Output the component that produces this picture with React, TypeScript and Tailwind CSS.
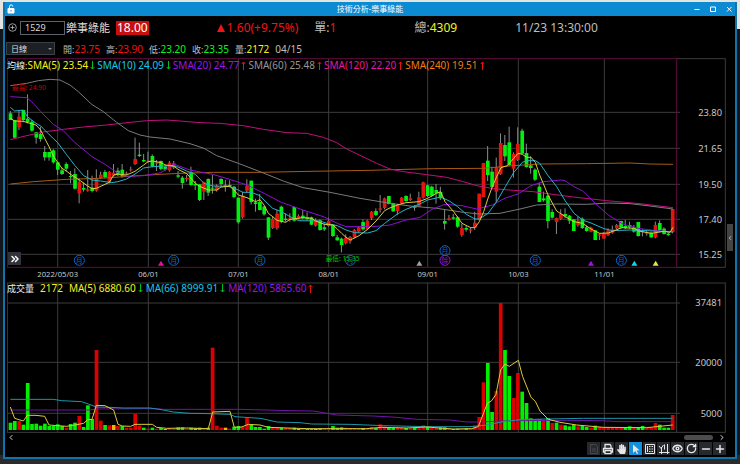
import React, { useState } from 'react';
import { ChevronLeft, ChevronRight, ChevronsRight, Eye, Minus, Plus, RotateCw } from 'lucide-react';
import { FaHandPaper } from 'react-icons/fa';

// Chart space: one unit is a third of a pixel, one bar every 12.9 units
const FIRST_X = 31;
const STEP = 12.9;
const barX = (i: number) => FIRST_X + i * STEP;

type Candle = [string, number, number, number, number];

// colour, body top, body bottom, wick top, wick bottom
const candles: Candle[] = [
    ['g', 115, 135, 108, 135], ['g', 135, 188, 135, 190], ['r', 125, 157, 105, 165], ['g', 105, 135, 105, 142],
    ['g', 131, 142, 58, 145], ['g', 140, 167, 135, 170], ['g', 172, 188, 172, 206], ['g', 177, 192, 155, 200],
    ['g', 231, 247, 213, 257], ['g', 231, 247, 231, 257], ['g', 226, 262, 222, 266], ['g', 262, 284, 262, 300],
    ['g', 286, 297, 278, 300], ['g', 267, 281, 262, 290], ['g', 303, 306, 288, 325], ['g', 297, 341, 280, 343],
    ['r', 322, 355, 310, 385], ['g', 339, 344, 322, 350], ['r', 343, 347, 285, 350], ['g', 338, 348, 302, 352],
    ['r', 310, 347, 283, 350], ['r', 299, 309, 290, 312], ['g', 291, 307, 285, 310], ['r', 291, 322, 288, 326],
    ['r', 293, 302, 267, 305], ['g', 287, 300, 278, 303], ['g', 284, 304, 267, 308], ['r', 293, 296, 290, 300],
    ['r', 283, 286, 275, 290], ['r', 252, 267, 188, 270], ['g', 239, 243, 203, 246], ['g', 255, 259, 237, 262],
    ['r', 257, 260, 230, 263], ['g', 243, 274, 238, 277], ['r', 262, 266, 255, 288], ['g', 258, 282, 257, 286],
    ['g', 275, 284, 268, 287], ['r', 263, 286, 258, 290], ['r', 265, 278, 258, 282], ['g', 301, 305, 288, 310],
    ['g', 308, 324, 303, 341], ['r', 309, 313, 300, 320], ['g', 291, 330, 275, 332], ['g', 327, 331, 318, 345],
    ['g', 328, 375, 328, 378], ['r', 322, 350, 320, 375], ['g', 312, 353, 310, 363], ['g', 338, 341, 300, 356],
    ['r', 333, 346, 328, 350], ['g', 312, 327, 310, 333], ['g', 331, 334, 315, 350], ['g', 330, 334, 316, 337],
    ['g', 335, 366, 333, 370], ['g', 368, 442, 368, 446], ['r', 362, 427, 350, 431], ['r', 333, 347, 313, 352],
    ['g', 317, 381, 317, 388], ['g', 382, 387, 371, 410], ['g', 381, 405, 357, 406], ['g', 395, 418, 393, 422],
    ['g', 427, 488, 427, 495], ['r', 432, 459, 423, 462], ['r', 416, 460, 405, 464], ['g', 395, 440, 392, 445],
    ['g', 431, 435, 415, 440], ['r', 430, 434, 415, 440], ['g', 396, 437, 395, 440], ['r', 423, 430, 418, 433],
    ['g', 422, 430, 405, 433], ['g', 427, 432, 412, 437], ['g', 427, 449, 425, 450], ['r', 435, 452, 430, 455],
    ['g', 436, 465, 433, 467], ['g', 457, 463, 445, 468], ['r', 437, 453, 428, 455], ['g', 449, 483, 448, 486],
    ['g', 487, 496, 480, 497], ['g', 491, 510, 488, 532], ['r', 489, 505, 478, 508], ['r', 486, 499, 483, 506],
    ['r', 465, 487, 462, 490], ['r', 457, 470, 453, 474], ['g', 441, 463, 433, 467], ['r', 437, 462, 434, 465],
    ['r', 410, 430, 408, 435], ['g', 408, 420, 400, 423], ['r', 400, 404, 360, 413], ['r', 370, 399, 368, 403],
    ['g', 363, 387, 363, 388], ['g', 385, 409, 383, 411], ['r', 390, 408, 386, 420], ['r', 368, 385, 366, 387],
    ['g', 363, 378, 361, 380], ['r', 370, 375, 356, 378], ['g', 394, 398, 390, 407], ['r', 367, 394, 350, 396],
    ['r', 322, 368, 320, 371], ['g', 331, 363, 329, 366], ['g', 335, 362, 332, 366], ['g', 345, 355, 327, 386],
    ['g', 351, 370, 335, 375], ['g', 438, 446, 405, 464], ['r', 430, 434, 420, 437], ['g', 427, 431, 417, 434],
    ['g', 427, 455, 424, 458], ['r', 459, 480, 446, 485], ['g', 459, 464, 453, 470], ['r', 463, 467, 458, 475],
    ['r', 443, 458, 410, 465], ['r', 356, 434, 356, 436], ['r', 264, 366, 264, 366], ['g', 257, 300, 213, 318],
    ['g', 290, 336, 275, 338], ['r', 276, 350, 248, 382], ['r', 204, 298, 175, 300], ['g', 210, 244, 180, 258],
    ['g', 202, 270, 155, 273], ['r', 237, 281, 232, 308], ['r', 207, 255, 157, 258], ['g', 167, 236, 161, 238],
    ['g', 234, 276, 206, 278], ['g', 271, 279, 244, 296], ['g', 284, 314, 280, 318], ['g', 335, 381, 323, 381],
    ['g', 370, 376, 350, 380], ['g', 362, 438, 360, 460], ['g', 411, 428, 403, 431], ['r', 429, 441, 428, 477],
    ['r', 417, 431, 403, 435], ['g', 417, 424, 400, 430], ['g', 422, 437, 420, 447], ['g', 433, 468, 433, 468],
    ['r', 437, 451, 425, 455], ['g', 431, 459, 427, 462], ['g', 457, 468, 452, 470], ['r', 458, 470, 455, 472],
    ['g', 466, 495, 466, 495], ['r', 478, 482, 475, 495], ['r', 474, 491, 472, 491], ['r', 466, 480, 460, 483],
    ['r', 463, 473, 452, 476], ['r', 450, 460, 447, 463], ['g', 438, 458, 438, 462], ['g', 453, 459, 435, 463],
    ['g', 450, 457, 440, 460], ['g', 458, 470, 450, 473], ['g', 441, 483, 441, 485], ['r', 468, 472, 463, 484],
    ['r', 472, 476, 467, 482], ['g', 473, 487, 470, 489], ['r', 450, 487, 440, 490], ['g', 444, 465, 436, 467],
    ['g', 461, 477, 457, 479], ['g', 476, 480, 472, 483], ['r', 402, 472, 402, 475],
];

const volumes =
    'g443 g438 r438 g449 g324 g447 g446 g452 g446 g453 g453 g448 g453 r458 g447 g443 r423 g456 g391 g432 ' +
    'r225 r437 g450 r451 y450 r453 g453 r458 r458 r417 r452 g458 r461 g458 r461 g459 y462 r459 r461 g457 ' +
    'g457 r461 g458 y460 g458 r460 g458 r218 r452 r458 y458 r461 g455 g453 r455 r429 g450 g456 g456 g461 ' +
    'g453 r456 r456 g458 r459 r459 g458 y462 r459 g460 g461 y462 g460 r461 r460 g453 g458 g457 r458 r459 ' +
    'r460 r461 g459 r459 r456 g459 r448 r455 g456 g458 r458 r459 g459 r460 g459 r459 r451 g455 r458 r459 ' +
    'g457 g457 r461 y462 g461 r461 g460 r461 r452 r426 r322 g264 g411 r348 r84 g225 g303 r369 r294 g350 ' +
    'g384 g430 g434 g433 r436 g429 r444 g443 r449 g451 g454 g449 r454 g453 g456 r458 g452 r456 r457 r458 ' +
    'r458 r458 r458 g456 g454 r456 g457 g453 r458 r457 r444 g449 g458 g458 r420';

const priceLines = [
    { color: '#a85a14', points: '31,327 100,320 200,313 300,310 400,303 480,298 540,295 640,292 780,292 930,289 1110,286 1180,284 1300,281 1450,280 1540,272 1620,267 1760,266 1890,264 1950,267 2019,268' },
    { color: '#c0107c', points: '31,194 80,182 130,171 190,163 250,156 320,150 390,142 440,137 500,135 540,138 600,143 660,145 730,152 790,163 860,173 920,175 970,187 1010,203 1040,222 1080,241 1130,265 1170,282 1210,290 1280,299 1340,307 1390,320 1430,332 1480,341 1540,346 1600,350 1620,353 1720,366 1820,377 1920,386 2019,398' },
    { color: '#7a7a7a', points: '31,32 80,25 115,17 150,13 180,15 210,30 235,50 275,88 310,110 350,142 385,167 420,180 450,186 510,192 570,206 612,220 650,242 715,265 780,290 850,318 909,338 990,352 1080,370 1170,385 1230,393 1310,400 1390,412 1438,417 1500,415 1560,402 1610,390 1670,387 1760,388 1825,384 1890,386 1950,393 2019,402' },
    { color: '#8a12d0', points: '31,65 80,68 95,80 122,110 160,148 190,167 225,203 276,245 315,268 350,292 380,304 431,302 483,293 521,267 570,285 638,298 689,313 741,330 792,355 844,382 909,405 973,426 1012,445 1038,455 1080,455 1130,454 1170,450 1218,435 1260,427 1296,403 1335,388 1386,392 1430,402 1477,390 1516,369 1554,357 1593,332 1630,320 1682,315 1695,317 1722,335 1748,348 1786,385 1825,420 1870,448 1920,461 1970,467 2019,470' },
    { color: '#22b4cc', points: '31,97 44,108 70,105 82,125 108,145 122,153 147,178 173,203 199,238 225,272 251,302 276,315 302,318 335,323 354,320 380,312 405,297 431,279 457,275 509,272 534,276 560,288 586,298 612,325 638,333 689,334 715,345 728,352 754,352 780,362 792,375 818,400 844,410 870,425 896,437 960,438 986,447 1012,452 1038,465 1064,473 1103,474 1128,467 1154,445 1192,417 1218,403 1257,388 1283,375 1322,366 1348,378 1373,395 1399,418 1425,432 1438,432 1464,415 1490,380 1516,335 1541,293 1567,262 1580,257 1606,257 1619,265 1645,303 1670,335 1696,378 1722,415 1748,435 1773,444 1812,461 1838,467 1890,465 1942,467 2019,471' },
    { color: '#dccb3c', points: '31,130 44,138 70,139 90,145 108,150 122,165 134,190 147,215 160,243 173,262 186,280 199,288 212,298 238,315 263,333 276,341 289,340 328,322 341,300 354,297 380,300 405,289 431,270 444,260 457,258 483,263 496,270 521,273 534,283 560,296 573,310 586,325 599,334 625,345 650,345 663,336 689,334 702,345 715,360 741,368 754,374 767,380 780,374 792,390 805,415 818,425 831,436 857,442 870,433 909,428 935,430 947,438 973,448 999,450 1012,462 1025,475 1038,487 1051,495 1077,482 1103,463 1128,438 1154,407 1167,400 1192,390 1218,383 1257,380 1283,370 1309,355 1322,350 1335,380 1361,410 1386,445 1412,458 1425,458 1438,440 1451,410 1464,370 1477,335 1490,305 1503,278 1522,272 1541,250 1554,235 1567,238 1580,247 1593,247 1606,262 1619,300 1645,362 1670,408 1696,425 1722,440 1748,445 1773,462 1799,475 1825,474 1851,464 1864,458 1903,460 1916,468 1954,475 1993,469 2010,472 2019,457' },
];

const volumeLines = [
    { color: '#7314a8', points: '31,405 270,405 289,402 470,401 490,403 720,403 870,407 940,408 970,413 1010,420 1120,423 1190,427 1250,433 1350,435 1400,441 1440,441 1500,438 1560,437 1700,436 1800,437 1860,440 2018,440' },
    { color: '#1e96a8', points: '31,373 160,373 185,377 245,380 265,387 289,396 330,397 370,399 450,399 490,405 520,411 570,415 630,416 690,418 705,425 780,430 795,433 830,441 900,443 935,447 1050,448 1150,452 1280,455 1410,455 1460,450 1510,440 1560,434 1640,432 1750,430 2018,430' },
    { color: '#dccb3c', points: '31,396 44,430 70,438 82,421 108,421 134,424 147,450 199,454 225,450 251,445 263,434 276,433 289,391 315,392 341,405 354,448 367,453 392,454 405,448 457,448 470,457 500,460 560,459 625,461 638,411 690,409 703,457 725,456 745,448 780,450 805,457 920,461 1100,461 1145,457 1220,459 1280,456 1360,462 1415,461 1435,455 1462,385 1475,377 1488,358 1502,285 1515,267 1528,274 1555,256 1568,305 1593,367 1606,379 1620,408 1645,433 1680,442 1730,450 1810,457 1940,458 2018,450' },
];

const months = [
    { x: 173, label: '2022/05/03' },
    { x: 445, label: '06/01' },
    { x: 715, label: '07/01' },
    { x: 986, label: '08/01' },
    { x: 1283, label: '09/01' },
    { x: 1555, label: '10/03' },
    { x: 1813, label: '11/01' },
];

const priceTicks = [
    { y: 112, label: '23.80' },
    { y: 220, label: '21.65' },
    { y: 328, label: '19.50' },
    { y: 433, label: '17.40' },
    { y: 538, label: '15.25' },
];

const volumeTicks = [
    { y: 84, label: '37481' },
    { y: 262, label: '20000' },
    { y: 415, label: '5000' },
];

const events = [
    { x: 238, y: 556, label: '月', color: '#0c68c0' },
    { x: 521, y: 556, label: '月', color: '#0c68c0' },
    { x: 780, y: 556, label: '月', color: '#0c68c0' },
    { x: 1051, y: 556, label: '月', color: '#0c68c0' },
    { x: 1335, y: 527, label: '月', color: '#0c68c0' },
    { x: 1335, y: 556, label: '除', color: '#9414e0' },
    { x: 1606, y: 556, label: '月', color: '#0c68c0' },
    { x: 1864, y: 556, label: '月', color: '#0c68c0' },
];

const triangles = [
    { x: 483, color: '#e0159a' },
    { x: 1258, color: '#a0a0a0' },
    { x: 1773, color: '#a012e0' },
    { x: 1903, color: '#10d8e8' },
    { x: 1967, color: '#e0e83c' },
];

const candleFill: Record<string, string> = { g: '#00f010', r: '#e61410' };
const volumeFill: Record<string, string> = { g: '#00f000', r: '#dc0000', y: '#f0b400' };

const PriceChart = () => (
    <svg viewBox="21 -51 2157 672" className="block w-full h-auto" role="img" aria-label="日線">
        <g stroke="#3c3c3c" strokeWidth="3">
            {months.map((m) => (
                <line key={m.x} x1={m.x} x2={m.x} y1={-49} y2={577} />
            ))}
            {priceTicks.map((t) => (
                <line key={t.y} x1={22} x2={2040} y1={t.y} y2={t.y} />
            ))}
            <path d="M2030 -49H2176V577H2030" fill="none" />
        </g>
        <rect x={22} y={-49} width={2008} height={626} fill="none" stroke="#5e0c3c" strokeWidth="3" />
        {candles.map(([c, top, bottom, high, low], i) => (
            <g key={i}>
                <line x1={barX(i)} x2={barX(i)} y1={high} y2={low} stroke="#8c8c8c" strokeWidth="3" />
                <rect x={barX(i) - 5} y={top} width={11} height={bottom - top} fill={candleFill[c]} />
            </g>
        ))}
        {priceLines.map((l) => (
            <polyline key={l.color} points={l.points} fill="none" stroke={l.color} strokeWidth="3" strokeLinejoin="round" />
        ))}
        <text x={36} y={45} fontSize="20" fill="#c80000">最高: 24.90</text>
        <text x={977} y={558} fontSize="20" fill="#00c800">最低: 15.35</text>
        {events.map((e) => (
            <g key={`${e.x}-${e.y}`}>
                <circle cx={e.x} cy={e.y} r={15} fill="none" stroke={e.color} strokeWidth="3" />
                <text x={e.x} y={e.y + 8} fontSize="21" textAnchor="middle" fill={e.color}>{e.label}</text>
            </g>
        ))}
        {triangles.map((t) => (
            <path key={t.x} d={`M${t.x} 557l9 15h-18z`} fill={t.color} />
        ))}
        {priceTicks.map((t) => (
            <text key={t.y} x={2166} y={t.y + 10} fontSize="28" textAnchor="end" fill="#c8c8c8">{t.label}</text>
        ))}
        {months.map((m) => (
            <text key={m.x} x={m.x} y={606} fontSize="23" textAnchor="middle" fill="#c8c8c8">{m.label}</text>
        ))}
    </svg>
);

const VolumeChart = () => (
    <svg viewBox="21 21 2157 453" className="block w-full h-auto" role="img" aria-label="成交量">
        <g stroke="#3c3c3c" strokeWidth="3">
            {months.map((m) => (
                <line key={m.x} x1={m.x} x2={m.x} y1={24} y2={472} />
            ))}
            {volumeTicks.map((t) => (
                <line key={t.y} x1={22} x2={2040} y1={t.y} y2={t.y} />
            ))}
            <rect x={22} y={24} width={2154} height={448} fill="none" />
            <line x1={2030} x2={2030} y1={24} y2={472} />
        </g>
        {volumes.split(' ').map((v, i) => {
            const top = Number(v.slice(1));
            return <rect key={i} x={barX(i) - 5} y={top} width={11} height={465 - top} fill={volumeFill[v[0]]} />;
        })}
        {volumeLines.map((l) => (
            <polyline key={l.color} points={l.points} fill="none" stroke={l.color} strokeWidth="3" strokeLinejoin="round" />
        ))}
        {volumeTicks.map((t) => (
            <text key={t.y} x={2166} y={t.y + 10} fontSize="28" textAnchor="end" fill="#c8c8c8">{t.label}</text>
        ))}
    </svg>
);

interface AverageProps {
    label: string;
    color: string;
    up?: boolean;
}

const Average = ({ label, color, up }: AverageProps) => (
    <span className={`flex items-center gap-[2px] ${color}`}>
        {label}
        <svg viewBox="0 0 5 9" className={`w-[5px] h-[9px] ${up ? 'text-[#f01010]' : 'text-[#00c020]'}`} fill="none" stroke="currentColor">
            {up ? <path d="M2.5 9V1M.7 3l1.8-2 1.8 2" /> : <path d="M2.5 0v8M.7 6l1.8 2 1.8-2" />}
        </svg>
    </span>
);

const Quote = ({ label, value, color }: { label: string; value: string; color: string }) => (
    <span className="text-[#bebebe]">
        {label}:<span className={color}>{value}</span>
    </span>
);

// Same as Quote, with the smaller label of the day's price row
const DayQuote = ({ label, value, color }: { label: string; value: string; color: string }) => (
    <span className="text-[#bebebe]">
        <span className="text-[9px]">{label}:</span>
        <span className={color}>{value}</span>
    </span>
);

const tools = [
    {
        name: '儲存',
        dim: true,
        icon: <svg viewBox="0 0 12 12" className="w-3 h-3" fill="none" stroke="currentColor"><path d="M2.5 1.5h5l2 2v7h-7zM4 6h4M4 8h4" /></svg>,
    },
    {
        name: '列印',
        icon: (
            <svg viewBox="0 0 12 12" className="w-3 h-3" fill="none" stroke="currentColor" strokeWidth="1.3">
                <path d="M3 5V1.5h5L9 3v2M3 9H1.5V5.5h9V9H9" />
                <path d="M3 7.5h6v3.2H3z" />
            </svg>
        ),
    },
    { name: '拖曳', icon: <FaHandPaper className="w-[9px] h-[10px]" /> },
    {
        name: '選取',
        active: true,
        icon: <svg viewBox="0 0 12 12" className="w-3 h-3" fill="currentColor"><path d="M3 1.5l6.5 5.7-2.9.2 1.6 3-1.3.6-1.5-3L3 9.9z" /></svg>,
    },
    {
        name: '數值',
        icon: (
            <svg viewBox="0 0 12 12" className="w-3 h-3" fill="none" stroke="currentColor">
                <path d="M1.5 1.5h9v9h-9z" />
                <path d="M3.5 3v6M5 3.5h1.5M5 6h1.5M5 8.5h1.5M7.5 3.5H9M7.5 6H9M7.5 8.5H9" />
            </svg>
        ),
    },
    {
        name: '指標',
        icon: (
            <svg viewBox="0 0 12 12" className="w-3 h-3" fill="none" stroke="currentColor">
                <path d="M3.5 4v7M9.5 1v10M1 9.5h10.5M1 3l2 2.5L5.5 2M6.5 1.500v5" />
            </svg>
        ),
    },
    { name: '檢視', icon: <Eye className="w-[11px] h-[11px]" strokeWidth={3} /> },
    { name: '重新整理', icon: <RotateCw className="w-[11px] h-[11px]" strokeWidth={3} /> },
    { name: '縮小', icon: <Minus className="w-3 h-3" strokeWidth={3} /> },
    { name: '放大', icon: <Plus className="w-3 h-3" strokeWidth={3} /> },
];

export default function App() {
    const [code, setCode] = useState('1529');
    const [period, setPeriod] = useState('日線');

    return (
        <div className="min-h-screen bg-[linear-gradient(#e4e4e0_29px,#10171c_29px,#10171c_455px,#2b2b2b_455px)] px-[3px] pt-[2px] pb-[4px] font-['Noto_Sans','Noto_Sans_CJK_TC',sans-serif]">
            <main className="border-x-2 border-b-2 border-[#1172ac] bg-black">
                <header className="flex items-center h-[14px] bg-[#0d8bd2] text-white">
                    <div className="flex-1 pl-[2px]">
                        <svg viewBox="0 0 8 10" className="w-2 h-[10px]" fill="none" stroke="currentColor">
                            <path d="M2.5 4V2.5a1.6 1.6 0 0 1 3.2 0" />
                            <path d="M1 4.5h6v4.5H1z" fill="currentColor" />
                            <path d="M4 6v1.5" stroke="#0d8bd2" />
                        </svg>
                    </div>
                    <h1 className="text-[8px] leading-none">技術分析-樂事綠能</h1>
                    <div className="flex flex-1 justify-end gap-2 pr-[2px]">
                        <button aria-label="最小化" className="grid place-items-center w-2 h-3">
                            <svg viewBox="0 0 8 8" className="w-2 h-2" stroke="currentColor"><path d="M1.5 4.5h5" /></svg>
                        </button>
                        <button aria-label="最大化" className="grid place-items-center w-2 h-3">
                            <svg viewBox="0 0 8 8" className="w-2 h-2" fill="none" stroke="currentColor"><path d="M1.5 2h5v4.5h-5z" /></svg>
                        </button>
                        <button aria-label="關閉" className="grid place-items-center w-2 h-3">
                            <svg viewBox="0 0 8 8" className="w-2 h-2" stroke="currentColor"><path d="M2 2l4.5 4.5M6.5 2L2 6.5" /></svg>
                        </button>
                    </div>
                </header>

                <section className="flex items-center h-[23px] pl-[3px] text-[12px] leading-none text-[#bebebe]">
                    <button aria-label="新增" className="mr-[3px]">
                        <svg viewBox="0 0 9 9" className="w-[9px] h-[9px]" fill="none" stroke="currentColor" strokeWidth=".8">
                            <circle cx="4.5" cy="4.5" r="3.8" />
                            <path d="M4.5 2.5v4M2.5 4.5h4" />
                        </svg>
                    </button>
                    <input
                        aria-label="股票代號"
                        value={code}
                        onChange={(e) => setCode(e.target.value)}
                        className="w-[45px] h-[14px] px-1 border border-[#5c6268] bg-black text-[9px] text-[#dcdcdc]"
                    />
                    <span className="ml-[1px] text-[11px] text-[#dcdcdc]">樂事綠能</span>
                    <span className="ml-[6px] px-[1px] py-[1px] bg-[#c80f0f] text-white">18.00</span>
                    <span className="flex items-center gap-[2px] ml-[68px] text-[#f01414]">
                        <svg viewBox="0 0 8 8" className="w-2 h-2" fill="currentColor"><path d="M4 0l4 8H0z" /></svg>
                        1.60(+9.75%)
                    </span>
                    <span className="ml-4"><Quote label="單" value="1" color="text-[#f01414]" /></span>
                    <span className="ml-[78px]"><Quote label="總" value="4309" color="text-[#f4f020]" /></span>
                    <time className="ml-[58px]">11/23 13:30:00</time>
                </section>

                <section className="flex items-center h-[19px] pl-[1px] text-[10px] leading-none">
                    <div className="relative">
                        <select
                            aria-label="週期"
                            value={period}
                            onChange={(e) => setPeriod(e.target.value)}
                            className="block w-[49px] h-[13px] pl-1 appearance-none border border-[#3a4046] bg-[#1c2024] text-[8px] leading-none text-[#dcdcdc]"
                        >
                            <option>日線</option>
                            <option>週線</option>
                            <option>月線</option>
                        </select>
                        <svg viewBox="0 0 4 2" className="absolute right-[3px] top-[6px] w-1 h-[2px] pointer-events-none" fill="#8c8c8c"><path d="M0 0h4L2 2z" /></svg>
                    </div>
                    <div className="flex gap-[6px] ml-2">
                        <DayQuote label="開" value="23.75" color="text-[#f01414]" />
                        <DayQuote label="高" value="23.90" color="text-[#f01414]" />
                        <DayQuote label="低" value="23.20" color="text-[#10f020]" />
                        <DayQuote label="收" value="23.35" color="text-[#10f020]" />
                        <DayQuote label="量" value="2172" color="text-[#f4f020]" />
                        <span className="text-[#bebebe]">04/15</span>
                    </div>
                </section>

                <div className="flex pl-[2px]">
                    <div className="flex-1 min-w-0">
                        <div className="relative">
                            <PriceChart />
                            <div className="absolute top-[2px] left-0 flex items-center gap-[2px] text-[10px] leading-[11px] whitespace-nowrap">
                                <span className="flex text-[#f0f0f0]">
                                    <span className="text-[9px]">均線:</span>
                                    <Average label="SMA(5) 23.54" color="text-[#f4f020]" />
                                </span>
                                <Average label="SMA(10) 24.09" color="text-[#18c8e8]" />
                                <Average label="SMA(20) 24.77" color="text-[#9a18e8]" up />
                                <Average label="SMA(60) 25.48" color="text-[#969696]" up />
                                <Average label="SMA(120) 22.20" color="text-[#e8189a]" up />
                                <Average label="SMA(240) 19.51" color="text-[#f07e14]" up />
                            </div>
                            <button aria-label="展開" className="absolute left-[1px] bottom-[17px] grid place-items-center w-[13px] h-[13px] bg-[#30343a] text-white">
                                <ChevronsRight className="w-3 h-3" strokeWidth={3} />
                            </button>
                        </div>
                        <div className="relative">
                            <VolumeChart />
                            <div className="absolute top-[1px] left-0 flex items-center gap-[3px] text-[10px] leading-[11px] whitespace-nowrap">
                                <span className="text-[9px] text-[#f0f0f0]">成交量</span>
                                <span className="mx-[3px] text-[#f4f020]">2172</span>
                                <Average label="MA(5) 6880.60" color="text-[#f4f020]" />
                                <Average label="MA(66) 8999.91" color="text-[#18c8e8]" />
                                <Average label="MA(120) 5865.60" color="text-[#9a18e8]" up />
                            </div>
                        </div>
                        <div className="flex items-center h-[9px] text-[#dcdcdc]">
                            <button aria-label="向左捲動"><ChevronLeft className="w-2 h-[11px]" strokeWidth={3} /></button>
                            <div className="flex flex-1 justify-end pr-[5px]">
                                <div className="w-[29px] h-[5px] rounded-full bg-[#4c4c4c]" />
                            </div>
                            <button aria-label="向右捲動"><ChevronRight className="w-2 h-[11px]" strokeWidth={3} /></button>
                        </div>
                        <div className="flex justify-end gap-[1px] pb-[2px]">
                            {tools.map((t) => (
                                <button
                                    key={t.name}
                                    aria-label={t.name}
                                    className={`grid place-items-center w-[13px] h-[13px] ${t.active ? 'bg-[#1490dc]' : 'bg-[#26292d]'} ${t.dim ? 'text-[#44484c]' : 'text-[#e6e6e6]'}`}
                                >
                                    {t.icon}
                                </button>
                            ))}
                        </div>
                    </div>
                    <aside className="w-[9px] pt-[166px] pl-[1px]">
                        <button aria-label="收合" className="grid place-items-center w-[6px] h-[27px] bg-[#444444] text-[#dcdcdc]">
                            <ChevronLeft className="w-[6px] h-[6px]" strokeWidth={3} />
                        </button>
                    </aside>
                </div>
            </main>
        </div>
    );
}
